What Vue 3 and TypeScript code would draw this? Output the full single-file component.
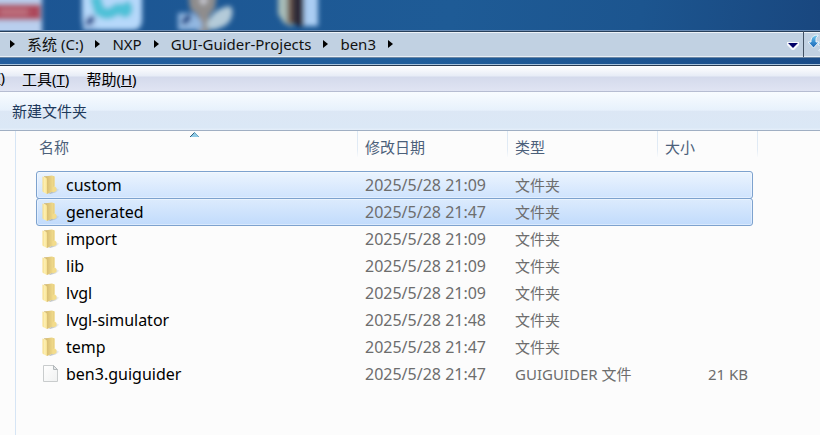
<script setup lang="ts">
interface Entry {
  name: string
  date: string
  type: string
  size?: string
  selected?: boolean
}

const crumbs: string[] = ['系统 (C:)', 'NXP', 'GUI-Guider-Projects', 'ben3']

const menus = [
  { label: '工具', key: 'T' },
  { label: '帮助', key: 'H' },
]

const entries: Entry[] = [
  { name: 'custom', date: '2025/5/28 21:09', type: '文件夹', selected: true },
  { name: 'generated', date: '2025/5/28 21:47', type: '文件夹', selected: true },
  { name: 'import', date: '2025/5/28 21:09', type: '文件夹' },
  { name: 'lib', date: '2025/5/28 21:09', type: '文件夹' },
  { name: 'lvgl', date: '2025/5/28 21:09', type: '文件夹' },
  { name: 'lvgl-simulator', date: '2025/5/28 21:48', type: '文件夹' },
  { name: 'temp', date: '2025/5/28 21:47', type: '文件夹' },
  { name: 'ben3.guiguider', date: '2025/5/28 21:47', type: 'GUIGUIDER 文件', size: '21 KB' },
]
</script>

<template>
  <div class="explorer">
    <svg class="defs" aria-hidden="true">
      <defs>
        <linearGradient id="folderFront" x1="0" x2="1" y1="0" y2="0">
          <stop offset="0" stop-color="#f6dc86" />
          <stop offset="0.5" stop-color="#fdf0b6" />
          <stop offset="1" stop-color="#f7e08c" />
        </linearGradient>
        <linearGradient id="folderBack" x1="0" x2="1" y1="0" y2="0">
          <stop offset="0" stop-color="#bfa25a" />
          <stop offset="0.35" stop-color="#dcc277" />
          <stop offset="1" stop-color="#f5e08f" />
        </linearGradient>
        <linearGradient id="folderShade" x1="0" x2="1" y1="0" y2="0">
          <stop offset="0" stop-color="#7f8b98" stop-opacity="0.7" />
          <stop offset="1" stop-color="#a4b0bd" stop-opacity="0.1" />
        </linearGradient>
        <linearGradient id="pageFill" x1="0" x2="1" y1="0" y2="1">
          <stop offset="0" stop-color="#ffffff" />
          <stop offset="1" stop-color="#f0f1f1" />
        </linearGradient>
        <linearGradient id="arrowBlue" x1="0" x2="0" y1="0" y2="1">
          <stop offset="0" stop-color="#7fd0f2" />
          <stop offset="0.5" stop-color="#3a92d4" />
          <stop offset="1" stop-color="#1c62b0" />
        </linearGradient>
      </defs>
    </svg>

    <div class="glass">
      <svg class="desktop" width="340" height="30" viewBox="0 0 340 30" aria-hidden="true">
        <defs>
          <filter id="soft" x="-10%" y="-30%" width="120%" height="160%">
            <feGaussianBlur stdDeviation="2.4" />
          </filter>
        </defs>
        <g filter="url(#soft)">
          <path d="M-12 -8H42V36H-12Z" fill="#b9cfee" />
          <path d="M-12 4H41V20H-12Z" fill="#ad4a5c" />
          <path d="M0 8H28V16H0Z" fill="#bb6d7b" />
          <path d="M82 -10H142V20Q142 30 132 30H92Q82 30 82 20Z" fill="#b6d8fa" />
          <path d="M95 -4L99 10Q106 16 113 12Q119 6 123 11Q127 14 127 8L124 3" fill="none" stroke="#50c1d8" stroke-width="11" />
          <path d="M83 15H96V30H83Z" fill="#aacaf0" />
          <path d="M88 25Q89 20 94 18" fill="none" stroke="#24498a" stroke-width="6" />
          <path d="M188 -8H217L215 8L209 16V34H198V15L190 9Z" fill="#8f8d8d" />
          <path d="M199 -2Q203 12 208 -2" fill="#c8c9d2" />
          <path d="M206 26Q212 9 229 6Q235 8 231 19Q227 28 211 30Z" fill="#b4cbd9" />
          <path d="M178 13H194L202 22V30H178Z" fill="#92b7e1" />
          <path d="M184 24Q185 18 191 17" fill="none" stroke="#1d4686" stroke-width="6" />
          <path d="M278 -8H292V27L284 23L278 14Z" fill="#a8bdb9" />
          <path d="M289 -8H304V27L290 23Z" fill="#2d2b38" />
          <path d="M287 -8H292V24H287Z" fill="#776254" />
          <path d="M304 -8H318V26H304Z" fill="#aacdf3" />
        </g>
      </svg>
    </div>

    <div class="address">
      <nav class="path" aria-label="地址">
        <span class="chevron"></span>
        <template v-for="crumb in crumbs" :key="crumb">
          <button type="button" class="crumb">{{ crumb }}</button>
          <span class="chevron"></span>
        </template>
      </nav>
      <button type="button" class="history" aria-label="以前的位置">
        <svg width="12" height="8" viewBox="0 0 12 8" aria-hidden="true">
          <path d="M0 0H12V3L7 8H5L0 3Z" fill="#f5f8fc" />
          <path d="M1 1H11L6 6Z" fill="#000066" />
        </svg>
      </button>
      <button type="button" class="refresh" aria-label="刷新">
        <svg width="22" height="20" viewBox="0 0 22 20" aria-hidden="true">
          <path d="M10 1Q4 1 3 6V8H0L5.500 14L11 8H8V5Q8 3 10 2Z" fill="url(#arrowBlue)" stroke="#eaf4fb" stroke-width="1" />
          <path d="M11 17Q16 16 17 12V11H20L15 5L10 11H13V13Q13 15 11 16Z" fill="url(#arrowBlue)" stroke="#eaf4fb" stroke-width="1" />
        </svg>
      </button>
    </div>
    <div class="frame"></div>

    <div class="menubar">
      <button type="button" class="menu clipped"><u>V</u>)</button>
      <button v-for="menu in menus" :key="menu.key" type="button" class="menu">
        {{ menu.label }}(<u>{{ menu.key }}</u>)
      </button>
    </div>

    <div class="toolbar">
      <button type="button" class="command">新建文件夹</button>
    </div>

    <div class="content">
      <div class="sidebar"></div>
      <main class="list">
        <table class="files">
          <thead>
            <tr>
              <th scope="col">
                名称
                <svg class="sort" width="9" height="5" viewBox="0 0 9 5" aria-hidden="true">
                  <path d="M4.500 0L9 5H0Z" fill="#8fcbe6" />
                  <path d="M0 5L4.500 0.500" fill="none" stroke="#2f5d7c" />
                  <path d="M4.500 0.500L9 5" fill="none" stroke="#6ca6c4" />
                </svg>
              </th>
              <th scope="col">修改日期</th>
              <th scope="col">类型</th>
              <th scope="col">大小</th>
            </tr>
          </thead>
          <tbody>
            <tr v-for="entry in entries" :key="entry.name" :class="{ selected: entry.selected }">
              <td class="name">
                <svg v-if="entry.size" width="18" height="20" viewBox="0 0 18 20" aria-hidden="true">
                  <path d="M1.500 1.500H11.500L15.500 5.500V17.500H1.500Z" fill="url(#pageFill)" stroke="#c9cccd" />
                  <path d="M11.500 1.500V5.500H15.500Z" fill="#e3e6e8" stroke="#b3b8bb" />
                </svg>
                <svg v-else width="18" height="20" viewBox="0 0 18 20" aria-hidden="true">
                  <path d="M7 19L13 13L17.500 14.500Q15 18 7 19Z" fill="url(#folderShade)" />
                  <path d="M2 1.500L10 0.500L12.500 1.500V16L5 19Z" fill="url(#folderBack)" />
                  <path d="M10.500 17V12.500Q11.500 11 13 11.500L14.500 13V16L11 17.500Z" fill="#f3dc8b" />
                  <path d="M11 1L12.500 1.500V11L11 12Z" fill="#e9d184" />
                  <path d="M0.500 1.500L4 2.500Q5 3 5 4.500V19L1 17Q0.500 16.500 0.500 16Z" fill="url(#folderFront)" />
                </svg>
                <span>{{ entry.name }}</span>
              </td>
              <td class="date">{{ entry.date }}</td>
              <td>{{ entry.type }}</td>
              <td class="size">{{ entry.size }}</td>
            </tr>
          </tbody>
        </table>
      </main>
    </div>
  </div>
</template>

<style>
body {
  background: #fcfcfc;
}
</style>

<style scoped>
.explorer {
  min-height: 100vh;
  display: flex;
  flex-direction: column;
  overflow: hidden;
  font-family: "Noto Sans", "Noto Sans CJK SC", sans-serif;
  font-size: 15px;
  line-height: 20px;
  color: #000;
}

.explorer * {
  box-sizing: border-box;
}

.defs {
  position: absolute;
  width: 0;
  height: 0;
}

button {
  border: 0;
  padding: 0;
  background: none;
  color: inherit;
  font: inherit;
  white-space: nowrap;
}

.glass {
  height: 30px;
  background: linear-gradient(98deg, #1c5593 0%, #1e5b96 55%, #1c558f 78%, #19477f 100%);
}

.desktop {
  display: block;
}

.address {
  display: flex;
  height: 28px;
  border-top: 1px solid #6c8db5;
  border-bottom: 1px solid #6b87a5;
  background: #c1d1e2;
  box-shadow: inset 0 1px #273f5a, inset 0 2px #eef3f8, inset 0 -1px #e6edf4;
}

.path {
  flex: 1;
  display: flex;
  align-items: center;
  gap: 12px;
  padding-left: 10px;
}

.crumb {
  color: #111;
}

.chevron {
  border: 4px solid transparent;
  border-left: 5px solid #000;
  border-right: 0;
}

.history {
  width: 20px;
  display: grid;
  place-items: center;
}

.history svg {
  margin-top: 4px;
}

.refresh {
  width: 17px;
  padding-left: 4px;
  overflow: hidden;
  border-left: 1px solid #435264;
  text-align: left;
}

.refresh svg {
  display: block;
}

.frame {
  height: 8px;
  background: linear-gradient(90deg, #245e9d, #205e9b 50%, #1a4c88);
  border-bottom: 1px solid #26384f;
  box-shadow: inset 0 -1px #a8c3dc;
}

.menubar {
  display: flex;
  gap: 17px;
  height: 26px;
  padding-top: 1px;
  border-bottom: 1px solid #b6bdd2;
  background: linear-gradient(#fff 0, #e7ecf6 40%, #d4daec 44%, #e0e4f3 100%);
}

.clipped {
  width: 5px;
  display: flex;
  justify-content: flex-end;
}

.toolbar {
  display: flex;
  height: 39px;
  padding-left: 12px;
  border-bottom: 1px solid #a0afc3;
  background: linear-gradient(#f8fcff 0, #e7f1fc 48%, #dce7f5 50%, #dbe8f6 94%, #e5effa 100%);
  color: #1e395b;
}

.content {
  flex: 1;
  display: flex;
  background: #fcfcfc;
}

.sidebar {
  width: 16px;
  border-right: 1px solid #d6e5f5;
}

.list {
  flex: 1;
  padding-left: 20px;
}

.files,
.files thead,
.files tbody {
  display: block;
}

.files tr {
  display: grid;
}

.files thead tr {
  width: 722px;
  grid-template-columns: 322px 150px 150px 100px;
  height: 40px;
}

.files th {
  position: relative;
  height: 26px;
  padding: 6px 0 0 7px;
  border-right: 1px solid;
  border-image: linear-gradient(#dce8f4, #e2ebf5 70%, #fcfcfc) 1;
  color: #4c607a;
  font-weight: 400;
  text-align: left;
}

.files th:first-child {
  padding-left: 3px;
}

.sort {
  position: absolute;
  top: 1px;
  left: 154px;
}

.files tbody tr {
  width: 717px;
  height: 28px;
  margin-bottom: -1px;
  grid-template-columns: 321px 150px 150px 94px;
  align-items: center;
  border: 1px solid transparent;
  border-radius: 3px;
}

.files tbody tr.selected {
  border-color: #7da2ce;
  background: linear-gradient(#ebf4fe, #cfe3fd);
  box-shadow: inset 0 0 0 1px #ffffff66;
}

.files tbody tr.selected + tr.selected {
  background: linear-gradient(#dcebfd, #c1dbfc);
}

.files td {
  padding: 0 0 0 7px;
  color: #6d6d6d;
  white-space: nowrap;
}

.files td.name,
.files td.date {
  font-size: 16px;
}

.files td.name {
  display: flex;
  align-items: center;
  gap: 6px;
  padding-left: 5px;
  color: #000;
}

.files td.size {
  padding: 0 4px 0 0;
  text-align: right;
}
</style>
